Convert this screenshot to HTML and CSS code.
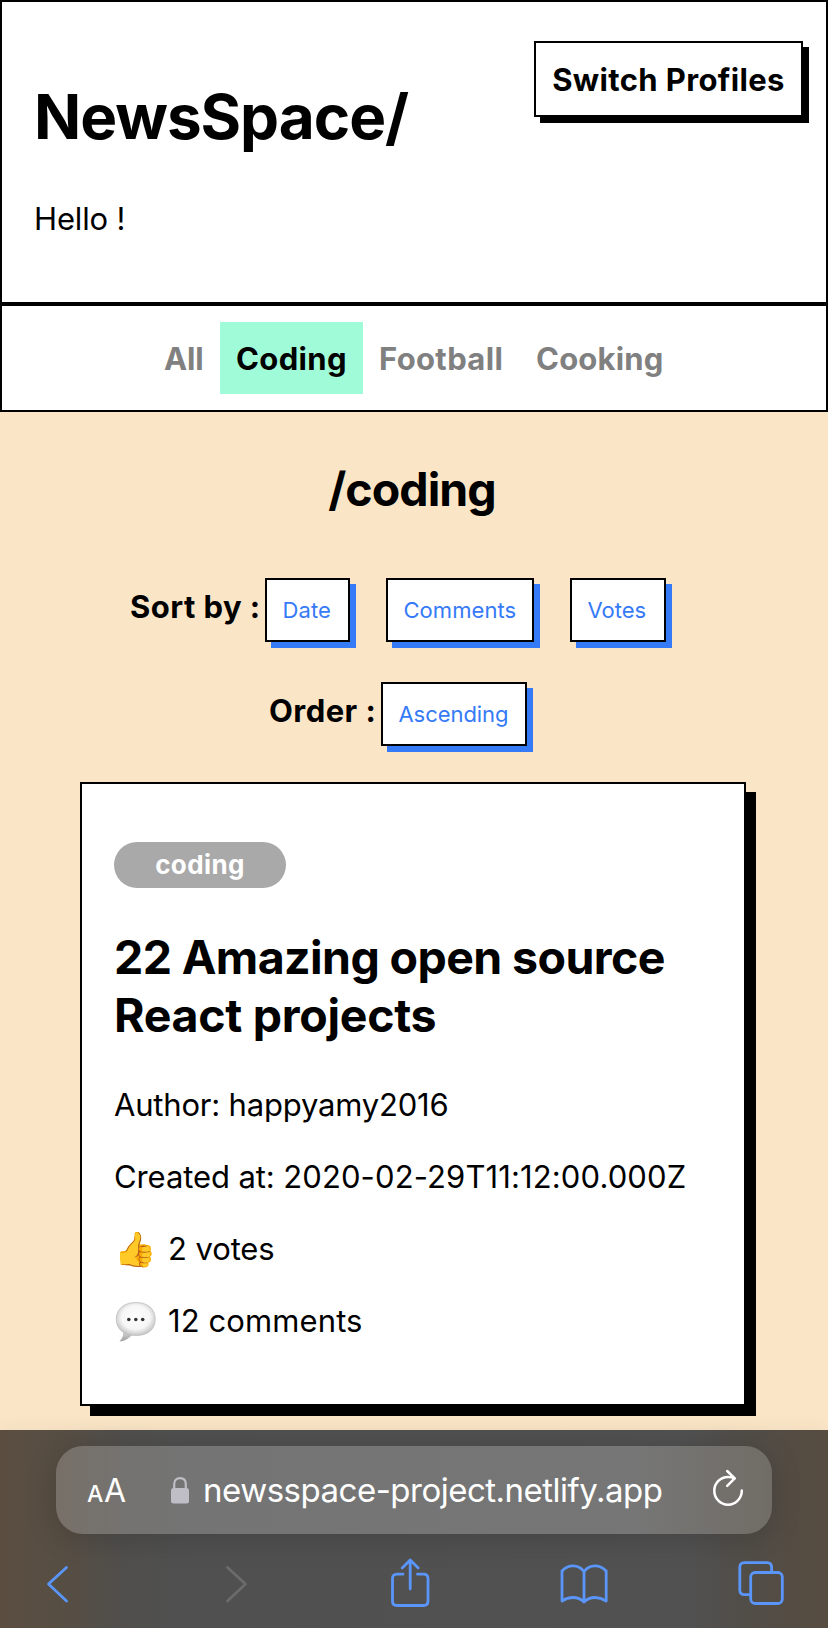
FILE: index.html
```html
<!DOCTYPE html>
<html lang="en">
<head>
<meta charset="utf-8">
<title>NewsSpace</title>
<link rel="stylesheet" href="styles.css">
</head>
<body>
<div class="screen">
  <header class="header">
    <div class="brand">
      <h1 class="site-title">NewsSpace/</h1>
      <p class="greeting">Hello !</p>
    </div>
    <button class="switch">Switch Profiles</button>
  </header>
  <nav class="topics">
    <a class="topic topic-all">All</a>
    <a class="topic topic-coding">Coding</a>
    <a class="topic topic-football">Football</a>
    <a class="topic topic-cooking">Cooking</a>
  </nav>
  <main class="main">
    <h2 class="page-title">/coding</h2>
    <div class="controls sort-row">
      <span class="label sort-label">Sort by :</span>
      <button class="pick pick-date">Date</button>
      <button class="pick pick-comments">Comments</button>
      <button class="pick pick-votes">Votes</button>
    </div>
    <div class="controls order-row">
      <span class="label order-label">Order :</span>
      <button class="pick pick-order">Ascending</button>
    </div>
    <article class="card">
      <span class="pill">coding</span>
      <h3 class="card-title"><span class="line-one">22 Amazing open source</span><br>React projects</h3>
      <p class="meta author">Author: happyamy2016</p>
      <p class="meta created"><span class="created-label">Created at: </span>2020-02-29T11:12:00.000Z</p>
      <p class="meta stat"><span class="emoji thumb">👍</span><span>2 votes</span></p>
      <p class="meta stat"><span class="emoji"><svg class="bubble" width="42" height="42" viewBox="0 0 42 42">
        <defs>
          <radialGradient id="bub" cx=".5" cy=".45" r=".56"><stop offset="0" stop-color="#fff"/><stop offset=".65" stop-color="#f6f6f6"/><stop offset="1" stop-color="#c2c2c4"/></radialGradient>
          <linearGradient id="tail" x1="0" y1="0" x2="0" y2="1"><stop offset="0" stop-color="#ddd"/><stop offset="1" stop-color="#9b9b9d"/></linearGradient>
        </defs>
        <path d="M8 30C8.500 35 7 38 4.500 40.500C9 40.500 14 37.500 17 34Z" fill="url(#tail)"/>
        <path d="M21 1.500C33 1.500 40.200 8 40.200 18C40.200 28.500 33 34.500 21 34.500C9 34.500 1.300 28.500 1.300 18C1.300 8 9 1.500 21 1.500Z" fill="url(#bub)" stroke="#b9b9bb" stroke-width=".7"/>
        <g fill="#333"><circle cx="13.800" cy="18.500" r="1.800"/><circle cx="20.800" cy="18.500" r="1.800"/><circle cx="27.700" cy="18.500" r="1.800"/></g>
      </svg></span><span class="comments">12 comments</span></p>
    </article>
  </main>
  <footer class="browser">
    <div class="address">
      <span class="text-size"><span class="small-a">A</span><span class="big-a">A</span></span>
      <svg class="lock" width="18" height="27" viewBox="0 0 18 27"><path d="M3.200 13V7.300C3.200 3.300 5.500 1.200 9 1.200S14.800 3.300 14.800 7.300V13" fill="none" stroke="#bfbdc5" stroke-width="2.200"/><rect x="0" y="11" width="18" height="15.500" rx="2.500" fill="#bfbdc5"/></svg>
      <span class="url">newsspace-project.netlify.app</span>
      <svg class="reload" width="32" height="38" viewBox="0 0 32 38" fill="none" stroke="#fff" stroke-width="2.500" stroke-linecap="round" stroke-linejoin="round"><path d="M22.500 9.400C20.700 8.500 18.500 8 16 8C8.500 8 2.300 14 2.300 21.800C2.300 29.500 8.500 35.700 16 35.700S29.800 29.500 29.800 21.500"/><path d="M15.200 2L22.700 9.300L15.200 16.800"/></svg>
    </div>
    <div class="tools">
      <svg class="back" width="24" height="40" viewBox="0 0 24 40"><path d="M21.500 3.500L3.500 20L21.500 37"/></svg>
      <svg class="forward" width="24" height="40" viewBox="0 0 24 40"><path d="M2.500 3.500L20.500 20L2.500 37"/></svg>
      <svg class="share" width="40" height="50" viewBox="0 0 40 50"><path d="M13 16.200H7Q2.500 16.200 2.500 20.700V43Q2.500 47.500 7 47.500H33.500Q38 47.500 38 43V20.700Q38 16.200 33.500 16.200H27.500M20.200 31V2.500M12.200 10L20.200 2L28.200 10"/></svg>
      <svg class="book" width="50" height="42" viewBox="0 0 50 42"><path d="M25 39V8.500C22 4.500 18.500 2.800 14 2.800C9 2.800 5.500 5 3 8V38C6 36 9.500 34.500 14 34.500C18.500 34.500 22 36 25 39C28 36 31.500 34.500 36 34.500C40.500 34.500 44 36 47.200 38V8C44.500 5 41 2.800 36 2.800C31.500 2.800 28 4.500 25 8.500"/></svg>
      <svg class="tabs" width="48" height="46" viewBox="0 0 48 46"><path d="M13 34.600H7.500Q2.800 34.600 2.800 30V7.300Q2.800 2.700 7.500 2.700H30Q34.600 2.700 34.600 7.300V12"/><rect x="13.700" y="12.500" width="31.600" height="31" rx="4.500"/></svg>
    </div>
  </footer>
</div>
</body>
</html>
```
FILE: styles.css
```css
* { box-sizing: border-box; }
body { margin: 0; font-family: Inter, "Noto Sans", sans-serif; color: #000; background: #fbe5c7; }
h1, h2, h3, p { margin: 0; }
button { font-family: inherit; margin: 0; padding: 0; background: #fff; border: 2px solid #000; color: #000; white-space: nowrap; flex: none; }
svg { display: block; flex: none; }
.screen { height: 1628px; display: flex; flex-direction: column; overflow: hidden; white-space: nowrap; }

.header { height: 304px; flex: none; background: #fff; border: 2px solid #000; display: flex; justify-content: space-between; align-items: flex-start; padding: 39px 23px 0 32px; }
.brand { padding-top: 38px; }
.site-title { font-size: 62px; line-height: 76px; font-weight: 700; letter-spacing: -1.05px; }
.greeting { margin-top: 45px; font-size: 31px; line-height: 38px; letter-spacing: -.15px; }
.switch { width: 269px; height: 76px; padding-top: 2px; font-size: 31px; font-weight: 700; line-height: 70px; letter-spacing: .37px; box-shadow: 6px 6px 0 #000; }

.topics { height: 108px; flex: none; background: #fff; border: 2px solid #000; display: flex; justify-content: center; padding: 16px 0; }
.topic { height: 72px; line-height: 73px; padding-left: 16px; font-size: 31px; font-weight: 700; color: #808080; letter-spacing: .35px; }
.topic-all { width: 72px; letter-spacing: -.2px; }
.topic-coding { width: 143px; background: #a0fcd8; color: #000; }
.topic-football { width: 157px; }
.topic-cooking { width: 160px; letter-spacing: .2px; }

.main { flex: none; height: 1018px; display: flex; flex-direction: column; overflow: hidden; }
.page-title { margin-top: 48px; text-align: center; font-size: 46.500px; line-height: 58px; font-weight: 700; letter-spacing: -.95px; padding-right: 4px; }
.controls { display: flex; height: 64px; font-size: 31px; }
.sort-row { margin-top: 60px; padding-left: 130px; }
.order-row { margin-top: 40px; padding-left: 269px; }
.label { font-weight: 700; line-height: 58px; letter-spacing: .45px; }
.sort-label { width: 135px; }
.order-label { width: 112px; }
.pick { height: 64px; padding: 0 0 0 15.500px; font-size: 22px; line-height: 60px; color: #357af6; text-align: left; box-shadow: 6px 6px 0 #357af6; }
.pick-date { width: 85px; letter-spacing: .1px; }
.pick-comments { width: 148px; margin-left: 36px; letter-spacing: .05px; }
.pick-votes { width: 96px; margin-left: 36px; }
.pick-order { width: 146px; letter-spacing: -.06px; }

.card { width: 666px; height: 624px; flex: none; margin: 36px 0 0 80px; background: #fff; border: 2px solid #000; box-shadow: 10px 10px 0 #000; padding: 58px 32px 0; }
.pill { display: block; width: 172px; height: 46px; border-radius: 23px; background: #a9a9a9; color: #fff; text-align: center; font-size: 26px; line-height: 45px; font-weight: 700; letter-spacing: .4px; }
.card-title { margin-top: 40px; font-size: 46.500px; line-height: 58px; font-weight: 700; letter-spacing: -.3px; }
.line-one { letter-spacing: -.61px; }
.meta { height: 38px; font-size: 31px; line-height: 38px; margin-top: 34px; }
.author { margin-top: 42px; letter-spacing: -.19px; }
.created { letter-spacing: .12px; }
.created-label { letter-spacing: -.1px; }
.stat { display: flex; letter-spacing: -.1px; }
.emoji { width: 54px; flex: none; }
.thumb { font-size: 34px; font-family: "Noto Color Emoji", Inter, sans-serif; }
.bubble { margin: -1px 0 0 1px; }
.comments { letter-spacing: .1px; }

.browser { height: 198px; flex: none; background: linear-gradient(90deg, #5b4e41 0, #574e43 60px, #504f4d 125px, #505050 180px, #515151 690px, #514d47 750px, #574c40 828px); display: flex; flex-direction: column; padding: 16px 56px 0; box-shadow: 0 0 20px rgba(0,0,0,.05); }
.address { width: 716px; height: 88px; flex: none; border-radius: 27px; background: linear-gradient(90deg, #777068 0, #747371 75px, #747474 130px, #767676 580px, #716d66 716px); box-shadow: 0 4px 30px rgba(0,0,0,.17); display: flex; align-items: flex-start; color: #fff; }
.text-size { width: 59px; margin-left: 31px; line-height: 89px; display: flex; align-items: baseline; font-weight: 400; }
.small-a { font-size: 23px; width: 17px; font-weight: 500; }
.big-a { font-size: 32px; }
.lock { margin: 31px 0 0 25px; }
.url { width: 490px; margin-left: 13px; padding-left: 1px; line-height: 88px; font-size: 33px; letter-spacing: -.5px; }
.reload { margin: 23px 0 0 20px; }
.tools { height: 94px; display: flex; align-items: flex-start; fill: none; stroke: #5a95fa; stroke-width: 2.800; stroke-linecap: round; stroke-linejoin: round; }
.back { margin: 30px 0 0 -11px; }
.forward { margin: 30px 0 0 156px; stroke: #6b6b6b; }
.share { margin: 24px 0 0 141px; }
.book { margin: 29px 0 0 129px; }
.tabs { margin: 26px 0 0 128px; }
```
